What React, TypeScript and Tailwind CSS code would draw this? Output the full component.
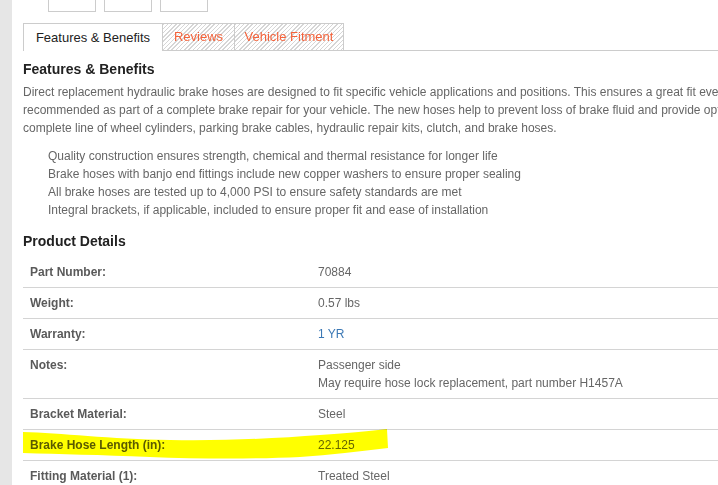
import React from 'react';

const details: { label: string; values: string[]; link?: boolean }[] = [
  { label: 'Part Number:', values: ['70884'] },
  { label: 'Weight:', values: ['0.57 lbs'] },
  { label: 'Warranty:', values: ['1 YR'], link: true },
  { label: 'Notes:', values: ['Passenger side', 'May require hose lock replacement, part number H1457A'] },
  { label: 'Bracket Material:', values: ['Steel'] },
  { label: 'Brake Hose Length (in):', values: ['22.125'] },
  { label: 'Fitting Material (1):', values: ['Treated Steel'] },
];

const features = [
  'Quality construction ensures strength, chemical and thermal resistance for longer life',
  'Brake hoses with banjo end fittings include new copper washers to ensure proper sealing',
  'All brake hoses are tested up to 4,000 PSI to ensure safety standards are met',
  'Integral brackets, if applicable, included to ensure proper fit and ease of installation',
];

const hatch =
  'bg-[repeating-linear-gradient(135deg,#d6d6d6_0px,#d6d6d6_1px,#ffffff_1px,#ffffff_3px)]';

export default function App() {
  return (
    <div className="relative w-[718px] h-[485px] overflow-hidden bg-white font-['Liberation_Sans',Arial,sans-serif] flex">
      {/* textured page margin */}
      <div className="w-[12px] shrink-0 bg-[#e6e6e6]" />

      <div className="flex-1 min-w-0 pl-[11px]">
        {/* thumbnails (clipped at top) */}
        <div className="flex gap-[8px] pl-[25px]">
          {[0, 1, 2].map((i) => (
            <div key={i} className="w-[48px] h-[12px] border-x border-b border-[#cccccc]" />
          ))}
        </div>

        {/* Tabs */}
        <div className="mt-[11px] flex h-[28px]">
          <div className="w-[140px] h-[28px] border-l border-t border-r border-[#cccccc] bg-white flex items-center justify-center text-[13px] text-[#222222] relative z-10">
            Features &amp; Benefits
          </div>
          <div className={`w-[72px] border-t border-r border-b border-[#cccccc] flex items-center justify-center text-[13px] text-[#f4623a] ${hatch}`}>
            Reviews
          </div>
          <div className={`w-[109px] border-t border-r border-b border-[#cccccc] flex items-center justify-center text-[13px] text-[#f4623a] ${hatch}`}>
            Vehicle Fitment
          </div>
          <div className="flex-1 border-b border-[#cccccc]" />
        </div>

        <h2 className="mt-[9px] text-[14px] leading-[18px] font-bold text-[#222222]">Features &amp; Benefits</h2>
        <div className="mt-[5px] text-[12px] leading-[18px] text-[#666666] whitespace-nowrap">
          <p>
            Direct replacement hydraulic brake hoses are designed to fit specific vehicle applications and positions. This ensures a great fit every time and are
          </p>
          <p>
            recommended as part of a complete brake repair for your vehicle. The new hoses help to prevent loss of brake fluid and provide optimal braking. Dorman offers a
          </p>
          <p>complete line of wheel cylinders, parking brake cables, hydraulic repair kits, clutch, and brake hoses.</p>
        </div>

        <ul className="mt-[10px] pl-[25px] text-[12px] leading-[18px] text-[#666666] whitespace-nowrap">
          {features.map((f) => (
            <li key={f}>{f}</li>
          ))}
        </ul>

        <h2 className="mt-[13px] text-[14px] leading-[18px] font-bold text-[#222222]">Product Details</h2>

        <div className="mt-[7px] text-[12px] leading-[18px]">
          {details.map((row) => (
            <div key={row.label} className="grid grid-cols-[295px_1fr] border-b border-[#d4d4d4] pt-[6px] pb-[6px]">
              <div className="pl-[7px] font-bold text-[#5a5a5a]">{row.label}</div>
              <div className={row.link ? 'text-[#3b78b5]' : 'text-[#666666]'}>
                {row.values.map((v) => (
                  <div key={v} className="whitespace-nowrap">{v}</div>
                ))}
              </div>
            </div>
          ))}
        </div>
      </div>

      {/* highlighter stroke */}
      <svg
        className="absolute left-0 top-0 w-[718px] h-[485px] pointer-events-none mix-blend-multiply"
        viewBox="0 0 718 485"
      >
        <path
          d="M23 432 C60 433 110 439 170 440 C230 441 280 438 320 435 C350 433 370 431 387 429 L388 448 C360 451 330 455 300 457 C260 459 200 459 150 457 C100 455 60 454 23 453 Z"
          fill="#ffff00"
        />
      </svg>
    </div>
  );
}
